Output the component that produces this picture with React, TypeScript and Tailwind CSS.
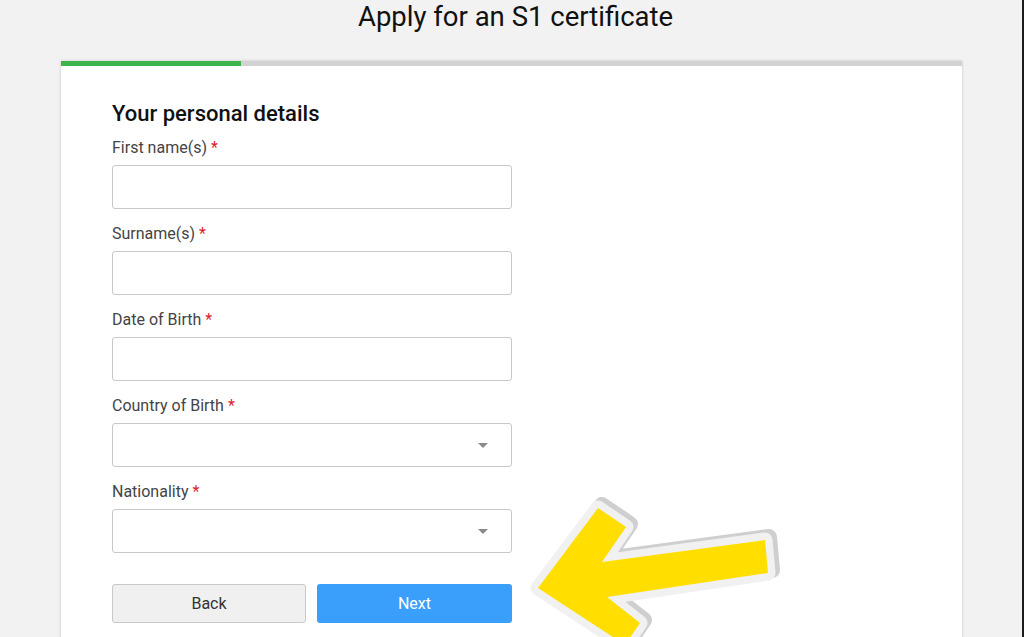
import React from 'react';

const fields = [
  { label: 'First name(s)', kind: 'text' },
  { label: 'Surname(s)', kind: 'text' },
  { label: 'Date of Birth', kind: 'text' },
  { label: 'Country of Birth', kind: 'select' },
  { label: 'Nationality', kind: 'select' },
];

const Caret = () => (
  <svg width="10" height="6" viewBox="0 0 10 6" className="absolute right-[23px] top-[19px]">
    <path d="M0 0 L10 0 L5 5 Z" fill="#8a8a8a" />
  </svg>
);

const Arrow = () => {
  const pts = '538,588 598,508 626,527 602,562 765,540 768,573 607,597 640,623 625,645 538,588';
  return (
    <svg
      className="absolute left-0 top-0 pointer-events-none"
      width="1024"
      height="637"
      viewBox="0 0 1024 637"
    >
      <polygon
        points={pts}
        transform="translate(4,-3)"
        fill="#cfcfd1"
        stroke="#cfcfd1"
        strokeWidth="16"
        strokeLinejoin="round"
      />
      <polygon points={pts} fill="#f1f1f1" stroke="#f1f1f1" strokeWidth="15" strokeLinejoin="round" />
      <polygon points={pts} fill="#ffde00" />
    </svg>
  );
};

const App = () => {
  return (
    <div
      className="relative h-[637px] w-[1024px] overflow-hidden bg-[#f2f2f2] border-r-2 border-[#1c1c1c]"
      style={{ fontFamily: 'Roboto, "Liberation Sans", sans-serif' }}
    >
      <h1 className="h-[34px] pl-[9px] text-center text-[27.5px] leading-[34px] text-[#111]">
        Apply for an S1 certificate
      </h1>
      <div className="mt-[27px] ml-[61px] w-[901px] h-[620px] bg-white shadow-[0_0_3px_rgba(0,0,0,0.18)]">
        <div className="flex h-[5px] bg-[#d2d2d2]">
          <div className="w-[180px] bg-[#3db54a]" />
        </div>
        <div className="pl-[51px] pt-[35px]">
          <h2 className="text-[22px] leading-[26px] font-medium text-[#111]">Your personal details</h2>
          <div className="mt-[12px] flex flex-col gap-[16px]">
            {fields.map((f) => (
              <div key={f.label} className="flex flex-col gap-[8px]">
                <label className="text-[16px] leading-[18px] text-[#444]">
                  {f.label} <span className="text-[#e0202f]">*</span>
                </label>
                <div className="relative h-[44px] w-[400px] rounded-[3px] border border-[#c8c8c8] bg-white">
                  {f.kind === 'select' && <Caret />}
                </div>
              </div>
            ))}
          </div>
          <div className="mt-[31px] flex gap-[11px]">
            <button className="h-[39px] w-[194px] rounded-[3px] border border-[#c8c8c8] bg-[#f0f0f0] text-[16px] text-[#333]">
              Back
            </button>
            <button className="h-[39px] w-[195px] rounded-[3px] bg-[#3a9ffb] text-[16px] text-white">
              Next
            </button>
          </div>
        </div>
      </div>
      <Arrow />
    </div>
  );
};

export default App;
